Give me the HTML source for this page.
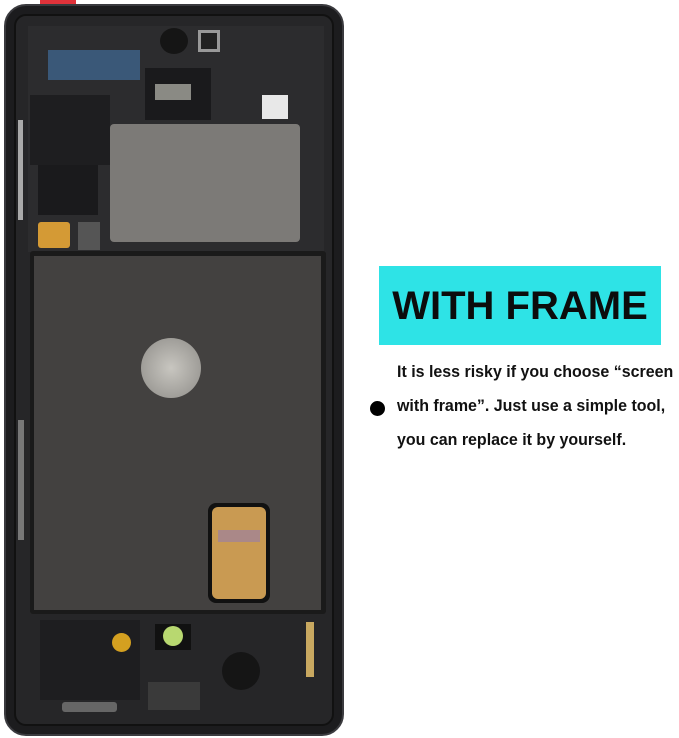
<!DOCTYPE html>
<html><head><meta charset="utf-8"><style>
body{margin:0;width:679px;height:738px;background:#fff;position:relative;overflow:hidden;font-family:"Liberation Sans",sans-serif}
div{position:absolute;box-sizing:border-box}
</style></head><body>
<div style="left:40px;top:0;width:36px;height:6px;background:#e0323a"></div>
<div style="left:4px;top:4px;width:340px;height:732px;background:#1c1c1e;border-radius:22px;border:2px solid #3a3a3e"></div>
<div style="left:14px;top:14px;width:320px;height:712px;background:#262628;border-radius:12px;border:2px solid #111"></div>
<div style="left:28px;top:26px;width:296px;height:226px;background:#2c2c2e"></div>
<div style="left:48px;top:50px;width:92px;height:30px;background:#3a5878"></div>
<div style="left:30px;top:95px;width:80px;height:70px;background:#1e1e20"></div>
<div style="left:38px;top:165px;width:60px;height:50px;background:#1a1a1c"></div>
<div style="left:145px;top:68px;width:66px;height:52px;background:#1a1a1c"></div>
<div style="left:155px;top:84px;width:36px;height:16px;background:#8a8a84"></div>
<div style="left:160px;top:28px;width:28px;height:26px;background:#151515;border-radius:50%"></div>
<div style="left:198px;top:30px;width:22px;height:22px;border:3px solid #999;background:#222"></div>
<div style="left:262px;top:95px;width:26px;height:24px;background:#e8e8e8"></div>
<div style="left:110px;top:124px;width:190px;height:118px;background:#7c7a77;border-radius:4px"></div>
<div style="left:38px;top:222px;width:32px;height:26px;background:#d49a35;border-radius:3px"></div>
<div style="left:78px;top:222px;width:22px;height:28px;background:#555"></div>
<div style="left:18px;top:120px;width:5px;height:100px;background:#aaa"></div>
<div style="left:18px;top:420px;width:6px;height:120px;background:#777"></div>
<div style="left:30px;top:251px;width:296px;height:363px;background:#1a1a1a;border-radius:3px"></div>
<div style="left:34px;top:256px;width:287px;height:354px;background:#434140"></div>
<div style="left:141px;top:338px;width:60px;height:60px;background:radial-gradient(circle,#c8c6c0,#8e8c88);border-radius:50%"></div>
<div style="left:208px;top:503px;width:62px;height:100px;background:#111;border-radius:8px"></div>
<div style="left:212px;top:507px;width:54px;height:92px;background:#c99a52;border-radius:6px"></div>
<div style="left:218px;top:530px;width:42px;height:12px;background:#a88"></div>
<div style="left:40px;top:620px;width:100px;height:80px;background:#1e1e20"></div>
<div style="left:112px;top:633px;width:19px;height:19px;background:#d4a020;border-radius:50%"></div>
<div style="left:155px;top:624px;width:36px;height:26px;background:#111"></div>
<div style="left:163px;top:626px;width:20px;height:20px;background:#b8d870;border-radius:50%"></div>
<div style="left:222px;top:652px;width:38px;height:38px;background:#151515;border-radius:50%"></div>
<div style="left:148px;top:682px;width:52px;height:28px;background:#3a3a3a"></div>
<div style="left:62px;top:702px;width:55px;height:10px;background:#666;border-radius:3px"></div>
<div style="left:306px;top:622px;width:8px;height:55px;background:#c8a860"></div>
<div style="left:379px;top:266px;width:282px;height:79px;background:#2ee3e6"></div>
<div style="left:379px;top:283px;width:282px;text-align:center;font-weight:bold;font-size:40px;line-height:46px;color:#0c0c0c">WITH FRAME</div>
<div style="left:370px;top:401px;width:15px;height:15px;background:#000;border-radius:50%"></div>
<div style="left:397px;top:355px;width:300px;font-weight:bold;font-size:17px;line-height:34px;color:#111;transform:scaleX(0.94);transform-origin:left;white-space:nowrap">It is less risky if you choose “screen<br>with frame”. Just use a simple tool,<br>you can replace it by yourself.</div>
</body></html>
